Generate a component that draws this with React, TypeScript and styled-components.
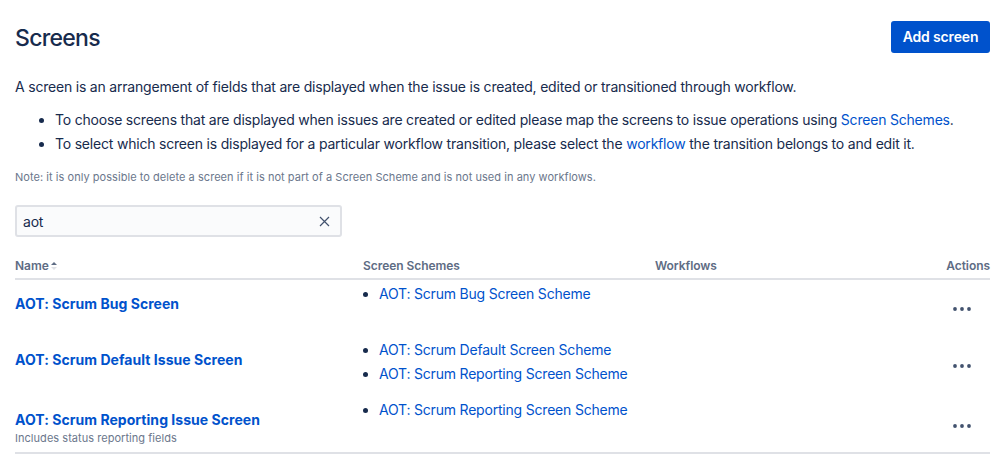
import React from "react";
import styled, { createGlobalStyle } from "styled-components";

const Global = createGlobalStyle`
  html, body { margin: 0; padding: 0; background: #fff; }
  body { font-family: Inter, "Liberation Sans", sans-serif; color: #172b4d; font-size: 14px; line-height: 20px; letter-spacing: -0.2px; }
  a { color: #0052cc; text-decoration: none; }
`;
const Page = styled.div`
  width: 999px; height: 462px; overflow: hidden; box-sizing: border-box;
  padding: 21px 9px 0 15px;
`;
const Header = styled.header`
  display: flex; justify-content: space-between; align-items: flex-start; height: 32px;
`;
const Title = styled.h1`
  margin: 0; font-size: 23px; line-height: 34px; font-weight: 500; letter-spacing: -0.7px;
`;
const AddButton = styled.button`
  width: 99px; height: 32px; border: 0; border-radius: 3px; background: #0052cc; color: #fff;
  font: 600 14px/32px Inter, sans-serif; padding: 0; letter-spacing: -0.15px;
`;
const Intro = styled.p`
  margin: 24px 0 0; 
`;
const Bullets = styled.ul`
  margin: 11px 0 0; padding: 0 0 0 40px; list-style: disc;
  li { height: 24px; line-height: 24px; white-space: nowrap; }
`;
const Note = styled.p`
  margin: 13px 0 0; font-size: 11px; line-height: 16px; color: #6b778c; letter-spacing: 0.045px;
`;
const Search = styled.div`
  margin-top: 20px; width: 327px; height: 32px; box-sizing: border-box;
  border: 2px solid #dfe1e6; border-radius: 3px; background: #fafbfc;
  display: flex; align-items: center; justify-content: space-between; padding: 0 10px 0 6px;
`;
const SearchText = styled.span`font-size: 14px; line-height: 20px; margin-top: 2px;`;
const Clear = styled.svg`width: 11px; height: 11px; display: block; color: #42526e;`;
const Table = styled.table`
  margin-top: 15px; width: 975px; table-layout: fixed; border-collapse: collapse;
  border-bottom: 2px solid #dfe1e6;
`;
const Head = styled.th<{ $w?: number; $right?: boolean }>`
  width: ${p => (p.$w ? `${p.$w}px` : "auto")};
  text-align: ${p => (p.$right ? "right" : "left")};
  padding: 0; height: 27px; vertical-align: top; padding-top: 6px; box-sizing: border-box;
  font-size: 12px; line-height: 16px; font-weight: 600; color: #5e6c84; letter-spacing: -0.05px;
  border-bottom: 2px solid #dfe1e6;
`;
const Sort = styled.svg`width: 8px; height: 10px; margin-left: 1px; vertical-align: -1px;`;
const Row = styled.tr<{ $h: number }>`height: ${p => p.$h}px;`;
const NameCell = styled.td`padding: 0; vertical-align: top;`;
const NameInner = styled.div<{ $top: number }>`padding-top: ${p => p.$top}px;`;
const NameLink = styled.a`display: block; font-weight: 700; font-size: 14px; line-height: 20px; letter-spacing: 0.04px;`;
const Desc = styled.div`font-size: 11px; line-height: 16px; color: #6b778c; letter-spacing: 0.04px; margin-top: 0;`;
const SchemeCell = styled.td`padding: 0; vertical-align: top;`;
const Schemes = styled.ul<{ $top: number }>`
  margin: 0; padding: ${p => p.$top}px 0 0 16px; list-style: disc;
  li { height: 24px; line-height: 24px; white-space: nowrap; }
`;
const ActionCell = styled.td`padding: 0; vertical-align: top; text-align: right;`;
const Dots = styled.svg<{ $top: number }>`
  display: block; width: 20px; height: 6px; margin: ${p => p.$top}px 18px 0 auto; color: #42526e;
`;

const DotsIcon = ({ top }: { top: number }) => (
  <Dots $top={top} viewBox="0 0 20 6" aria-hidden>
    <circle cx="3" cy="3" r="1.9" fill="currentColor" />
    <circle cx="10" cy="3" r="1.9" fill="currentColor" />
    <circle cx="17" cy="3" r="1.9" fill="currentColor" />
  </Dots>
);

const rows = [
  { name: "AOT: Scrum Bug Screen", h: 57, nameTop: 14, schemeTop: 2, dots: 26, schemes: ["AOT: Scrum Bug Screen Scheme"] },
  { name: "AOT: Scrum Default Issue Screen", h: 60, nameTop: 14, schemeTop: 2, dots: 27, schemes: ["AOT: Scrum Default Screen Scheme", "AOT: Scrum Reporting Screen Scheme"] },
  { name: "AOT: Scrum Reporting Issue Screen", desc: "Includes status reporting fields", h: 57, nameTop: 14, schemeTop: 2, dots: 27, schemes: ["AOT: Scrum Reporting Screen Scheme"] },
];

export default function App() {
  return (
    <Page>
      <Global />
      <Header>
        <Title>Screens</Title>
        <AddButton>Add screen</AddButton>
      </Header>
      <Intro>A screen is an arrangement of fields that are displayed when the issue is created, edited or transitioned through workflow.</Intro>
      <Bullets>
        <li>To choose screens that are displayed when issues are created or edited please map the screens to issue operations using <a href="#">Screen Schemes</a>.</li>
        <li>To select which screen is displayed for a particular workflow transition, please select the <a href="#">workflow</a> the transition belongs to and edit it.</li>
      </Bullets>
      <Note>Note: it is only possible to delete a screen if it is not part of a Screen Scheme and is not used in any workflows.</Note>
      <Search>
        <SearchText>aot</SearchText>
        <Clear viewBox="0 0 11 11" aria-hidden>
          <path d="M1 1l9 9M10 1l-9 9" stroke="currentColor" strokeWidth="1.2" fill="none" />
        </Clear>
      </Search>
      <Table>
        <thead>
          <tr>
            <Head $w={348}>
              Name
              <Sort viewBox="0 0 8 10" aria-hidden>
                <path d="M1 4l3-3 3 3z" fill="#5e6c84" />
                <path d="M1 6l3 3 3-3z" fill="#dfe1e6" />
              </Sort>
            </Head>
            <Head $w={292}>Screen Schemes</Head>
            <Head>Workflows</Head>
            <Head $w={80} $right>Actions</Head>
          </tr>
        </thead>
        <tbody>
          {rows.map(r => (
            <Row key={r.name} $h={r.h}>
              <NameCell>
                <NameInner $top={r.nameTop}>
                  <NameLink href="#">{r.name}</NameLink>
                  {r.desc && <Desc>{r.desc}</Desc>}
                </NameInner>
              </NameCell>
              <SchemeCell>
                <Schemes $top={r.schemeTop}>
                  {r.schemes.map(s => <li key={s}><a href="#">{s}</a></li>)}
                </Schemes>
              </SchemeCell>
              <td />
              <ActionCell><DotsIcon top={r.dots} /></ActionCell>
            </Row>
          ))}
        </tbody>
      </Table>
    </Page>
  );
}
